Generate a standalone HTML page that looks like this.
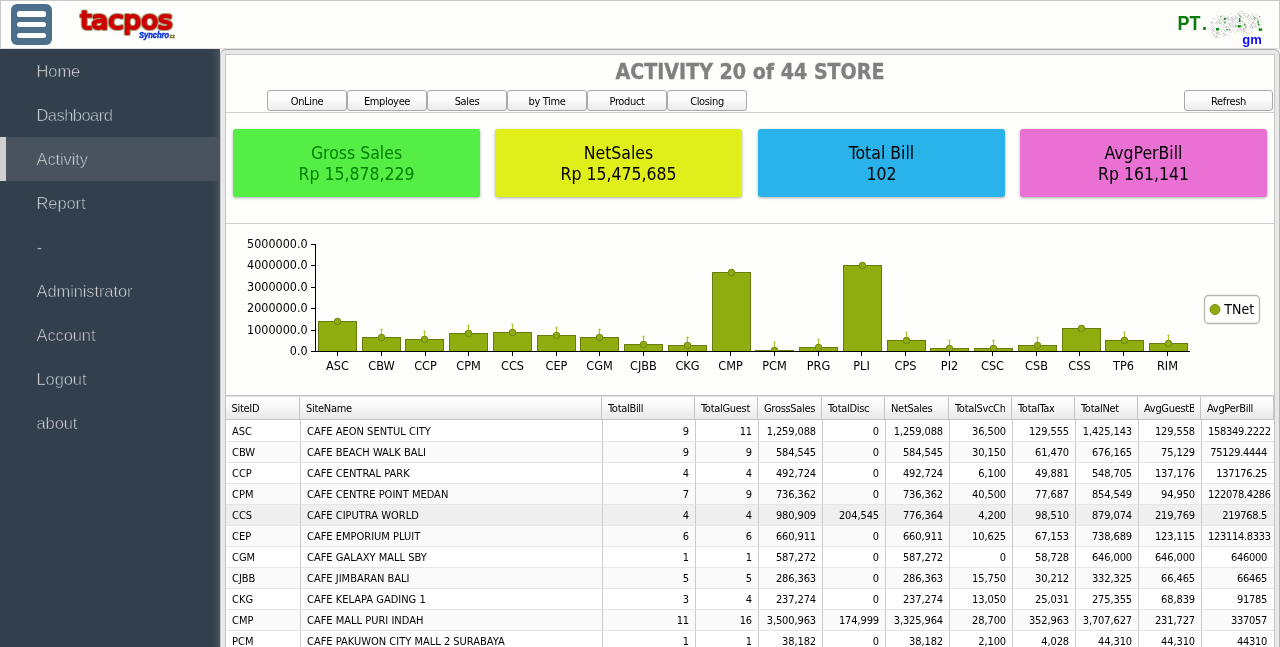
<!DOCTYPE html>
<html><head><meta charset="utf-8"><title>tacpos Synchro - Activity</title>
<style>
html,body{margin:0;padding:0}
body{width:1280px;height:647px;overflow:hidden;position:relative;background:#fdfdfb;font-family:"DejaVu Sans Condensed","DejaVu Sans","Liberation Sans",sans-serif;color:#000}
.abs{position:absolute}
#top{left:0;top:0;width:1278px;height:47px;background:#fdfdfb;border:1px solid #c8c8c8;border-bottom-color:#e0e0e0}
#burger{left:11px;top:4px;width:41px;height:41px;border-radius:6px;background:#4b6f8c}
#burger i{position:absolute;left:6px;width:29px;height:5.6px;border-radius:2.6px;background:#fdfdfb}
#side{left:0;top:49px;width:220px;height:598px;background:linear-gradient(90deg,#323f4d 0,#323f4d 210px,#39444f 215px,#4c555f 220px)}
#side div{position:absolute;left:0;width:220px;height:44px;line-height:45px;color:#dadcde;font-size:16.5px;text-indent:36.5px;font-family:"Liberation Sans",sans-serif;font-weight:normal;letter-spacing:-.1px;-webkit-text-stroke:.55px #323f4d}
#side div.act{-webkit-text-stroke-color:#48535f;background:linear-gradient(90deg,#cfcfcf 0,#cfcfcf 6px,#48535f 6px,#48535f 100%)}
#panel{left:220px;top:49px;width:1060px;height:610px;background:#e8e8e8;border-top:1px solid #a8a8a8;border-left:1px solid #c4c4c4;border-right:1px solid #b4b4b4;border-radius:6px 6px 0 0;box-sizing:border-box}
#inner{left:225px;top:54px;width:1048px;height:600px;background:#fefefd;border:1px solid #c6c6c6}
#title{left:226px;top:59px;width:1048px;text-align:center;font-weight:bold;font-size:21.2px;color:#808080;-webkit-text-stroke:.35px #808080;line-height:26px}
.btn{position:absolute;top:90px;height:19px;width:78px;border:1px solid #a9a9a9;border-radius:3px;background:linear-gradient(#ffffff,#fbfbfb 50%,#ececec);font-size:11px;line-height:22px;text-align:center;color:#000;letter-spacing:-.35px}
.hl{position:absolute;height:1px;background:#cfcfcf}
.card{position:absolute;top:129px;height:68px;width:247px;border-radius:3px;box-shadow:0 1px 3px rgba(0,0,0,.33);text-align:center;font-size:17.5px;line-height:21px}
.card span{display:block}
.card span:first-child{margin-top:14px}
#tbl{left:226px;top:395px;width:1048px;height:252px;overflow:hidden;font-size:11px}
.th{position:absolute;top:1px;height:24px;line-height:25px;box-sizing:border-box;border-top:1px solid #dedede;border-right:1px solid #c4c4c4;border-bottom:1px solid #c4c4c4;background:linear-gradient(#ffffff,#f9f9f9 40%,#e8e8e8);padding-left:6px;white-space:nowrap;color:#000;letter-spacing:-.3px}
.th span{display:block;overflow:hidden;margin-top:-1px}
.td{position:absolute;height:21px;line-height:21px;box-sizing:border-box;border-right:1px solid #cbcbcb;border-bottom:1px solid #e6e6e6;padding:0 6px;white-space:nowrap;color:#000}
.r{text-align:right;letter-spacing:-.12px}
.r.last{letter-spacing:-.3px;padding-right:7px}
#app{position:absolute;left:0;top:0;width:1280px;height:647px;overflow:hidden;will-change:transform}
</style></head><body><div id="app">

<div id="top" class="abs"></div>
<div id="burger" class="abs"><i style="top:7px"></i><i style="top:17.8px"></i><i style="top:28.6px"></i></div>
<svg class="abs" style="left:70px;top:0" width="130" height="49" viewBox="0 0 130 49">
<text x="10.5" y="29" font-family="DejaVu Sans, Liberation Sans, sans-serif" font-size="25.5" fill="#cc0000" stroke="#a8a17c" stroke-width="4.2" stroke-linejoin="round" textLength="92" lengthAdjust="spacingAndGlyphs">tacpos</text>
<text x="10.5" y="29" font-family="DejaVu Sans, Liberation Sans, sans-serif" font-size="25.5" fill="#cc0000" stroke="#cc0000" stroke-width="2.1" stroke-linejoin="round" textLength="92" lengthAdjust="spacingAndGlyphs">tacpos</text>
<text x="69" y="37.8" font-family="Liberation Sans, sans-serif" font-weight="bold" font-style="italic" font-size="8.6" fill="#0b35dd" stroke="#0b35dd" stroke-width=".5" textLength="30" lengthAdjust="spacingAndGlyphs">Synchro</text>
<text x="99.6" y="37.8" font-family="Liberation Sans, sans-serif" font-weight="bold" font-size="5.4" fill="#9a3c10" stroke="#6a7a20" stroke-width=".3">zz</text>
</svg>
<svg class="abs" style="left:1170px;top:2px" width="108" height="46" viewBox="0 0 108 46">
<text transform="scale(.93,1)" x="8.06 21.1 34.3" y="28" font-family="Liberation Sans, sans-serif" font-weight="bold" font-size="19.3" fill="#087c08">PT.</text>
<path d="M42.0 28.5l1 1M69.5 19.0l1 1M50.0 19.5l1 1M56.0 24.0l1 1M83.0 14.0l2.5 2.5M72.0 18.5l1 1M82.5 13.5l3 3M68.0 11.5l2.5 2.5M81.5 23.5l2 2M48.0 19.5l2.5 2.5M84.5 23.0l2.5 2.5M59.5 21.0l1 1M82.0 25.0l1 1M82.0 20.5l1 1M48.5 17.0l1.5 1.5M41.0 26.5l1 1M68.0 28.0v1.5M53.0 31.0l2.5 2.5M47.0 29.5v2.5M83.5 16.5l2 2M46.0 26.0l1 1M42.0 27.0l2 2M65.0 22.5l1 1M78.5 17.5l2 2M86.0 15.5l2.5 2.5M57.0 15.0v2M56.0 25.0v1M75.5 23.5v3M46.0 34.0l1.5 1.5" fill="none" stroke="#8c8c8c" stroke-width=".7"/><path d="M67.5 11.5l3 3M69.5 24.0l1 1M68.5 13.0l2.5 2.5M62.5 24.0l2 2M44.5 29.0l1 1M73.0 28.0l2.5 2.5M43.5 33.0l3 3M48.5 18.0l1 1M50.0 20.5l1 1M71.0 26.0v2.5M47.5 29.5l1.5 1.5M64.5 24.0l1 1M61.5 22.0l2 2M71.0 18.5l2.5 2.5M79.5 24.5l3 3M61.0 11.5l1 1M52.0 21.5l1.5 1.5M74.5 23.5l2.5 2.5M59.0 25.5l1 1M74.0 23.0l3 3M73.0 16.0l1 1M53.5 14.0l1 1M47.0 30.5l2.5 2.5M71.5 27.5l1.5 1.5M81.0 15.5l1 1M65.5 13.5l1 1M76.0 13.5l2.5 2.5M71.0 11.5l1 1M67.0 23.5v1.5M48.0 24.0l1 1M82.0 20.0l2 2M60.5 15.0l3 3M48.0 27.0v1.5M67.0 26.5l1.5 1.5M74.5 22.0l2.5 2.5M81.5 21.5v3M83.5 20.0l2 2M70.0 21.0l1 1M58.0 21.0l3 3M74.5 27.0l1.5 1.5M51.0 28.0v1M84.0 15.0v3M53.0 17.5v1.5M53.5 27.5l2.5 2.5M75.0 13.5l3 3M46.0 25.5l1.5 1.5M49.0 21.0l1 1M42.5 25.5l1.5 1.5M78.0 12.0l3 3M74.0 11.0l1 1M47.0 18.5v3M80.0 22.5l1 1" fill="none" stroke="#b2b2b2" stroke-width=".7"/><path d="M60.5 23.5l2 2M68.5 11.0l2.5 2.5M72.5 25.5l1 1M61.5 19.5l1 1M39.0 26.5v2M79.0 18.0l1.5 1.5M62.5 27.5l1 1M58.5 17.5v2M49.0 30.5l1.5 1.5M52.5 12.5l3 3M71.0 23.5v3M75.5 13.5l2.5 2.5M70.0 14.0l1 1M60.5 17.0l1 1M58.5 16.0l3 3M69.5 21.0l1 1M87.0 17.0l1 1M58.0 13.5v3M42.0 16.5l1 1M40.5 20.5l2 2M63.0 15.5l2.5 2.5M50.5 16.5l3 3M49.5 30.5l1 1M40.5 22.5l3 3M47.5 30.5v2.5M41.5 20.0l1 1M72.5 21.5l1.5 1.5M80.5 15.5l3 3M54.0 19.0v1.5M47.0 33.5l2 2M65.5 27.5l1 1M64.5 29.0v3M65.0 14.5l3 3M67.0 15.5v2M70.0 15.0l1 1M62.0 15.5l1 1M45.5 12.5l1.5 1.5M70.5 8.5l1 1M60.0 17.5l2 2M77.0 13.5v1M41.5 18.5l1 1M74.5 11.0l1 1M46.0 32.5l1.5 1.5M77.5 18.5l1 1M49.0 35.0v1M56.0 19.0l1 1M45.0 31.5l1.5 1.5M64.5 21.5l1 1M57.5 24.0l1 1M66.0 18.5v2.5M40.0 19.5l2.5 2.5M90.5 18.0v2M63.0 14.5l2 2M65.5 21.0v1.5M52.5 18.0v2.5M41.5 19.5l2 2M68.5 19.0v3M55.0 16.0l2 2M83.5 24.5l1.5 1.5M82.5 11.0l2.5 2.5M53.0 23.0l2 2M87.5 25.0l2 2M52.0 15.5v2M57.5 18.0l1 1M81.0 23.0l2.5 2.5M39.5 20.0l1 1M66.0 23.5v1M59.0 24.0l1.5 1.5M71.5 9.5l3 3M57.5 16.0l1.5 1.5M61.5 23.0l1 1M65.0 14.0l1 1M68.5 25.0l2 2M89.5 25.5v2.5M62.5 18.5l1.5 1.5M81.5 17.5l2.5 2.5M73.0 13.0l1 1M56.0 31.5l2.5 2.5M85.5 22.0v3M49.5 22.5l1 1M62.5 20.5l3 3M73.5 27.5v3M67.5 20.0v1M81.0 12.0l1.5 1.5M66.0 15.0l1.5 1.5M73.5 13.5l1 1M72.0 30.5l2 2M57.5 28.0v1M60.0 23.5l1 1M55.0 21.5l1 1M92.0 22.0v1M55.5 20.5v1M69.5 9.0v1.5M42.0 30.0l3 3M80.5 29.0l2 2M61.5 18.5l2.5 2.5M58.0 14.5v2M87.5 15.0l2 2M84.0 13.0l1 1M65.0 13.0l1.5 1.5M40.0 31.0l1 1M65.5 9.5l1 1M61.0 15.5l1.5 1.5M86.0 11.5l3 3M52.0 32.0l1.5 1.5M86.0 16.0l2 2M47.0 15.0l1 1M51.0 13.5l1 1M78.5 13.0l1.5 1.5M45.0 34.5l1 1M80.0 22.0v2.5M59.5 27.0l2.5 2.5M69.5 13.5v1M44.5 26.0l2.5 2.5M59.0 28.0l2.5 2.5M49.5 24.5v1M58.0 17.0v1M42.5 20.0l1 1M74.0 28.5l2.5 2.5M43.5 24.5l1 1M61.5 18.0l1 1M48.5 31.0l1 1M46.5 20.5l1.5 1.5M50.0 17.0v1M55.0 30.5v1M66.5 15.5l2 2M65.5 20.0l1 1M78.0 21.0l1 1M78.0 27.0l1 1M49.5 31.5l1 1M46.0 30.5l1.5 1.5M64.5 29.5l1 1M41.0 35.0l1.5 1.5M56.5 31.5l1.5 1.5M69.5 14.0l1.5 1.5M51.0 29.5l2.5 2.5M48.5 15.5l1 1M52.5 33.0l2.5 2.5M62.5 16.5l2 2M74.5 11.0l1 1M72.0 9.0l1.5 1.5M91.5 20.5l1 1M58.5 26.0v2M51.0 29.0l1 1M62.5 17.5v1.5M83.5 14.5l2 2M62.5 17.0l1.5 1.5M45.0 21.0l1 1M67.0 23.5l1 1M51.0 13.0v2.5M89.5 23.0l1.5 1.5M79.0 13.5v1M63.0 15.0l2.5 2.5M89.0 21.0v2M42.5 15.5l2.5 2.5M60.5 15.5l1 1M54.5 19.0l1 1M58.0 15.5v2.5M41.0 29.5l3 3M63.5 17.5l2.5 2.5M65.5 16.0l1.5 1.5M45.0 20.5l2.5 2.5M45.0 35.5l1 1M54.0 22.0l1.5 1.5M60.0 30.0l1 1M44.5 16.0l1 1M58.5 25.5l1 1M61.5 21.0l1 1M77.0 11.5l3 3" fill="none" stroke="#d2d2d2" stroke-width=".7"/>
<g fill="#108a10"><rect x="53.8" y="15.9" width="2" height="2"/><rect x="68.9" y="16.2" width="1.5" height="4"/><rect x="67.7" y="23" width="3" height="2.5"/><rect x="46" y="26" width="3" height="2.5"/><rect x="87.5" y="18.7" width="1.2" height="3"/><rect x="88.7" y="26.4" width="3.5" height="2.5"/><rect x="56" y="27.3" width="2" height="1"/><rect x="59" y="27.3" width="1" height="1"/><rect x="89.3" y="14.3" width="1" height="1"/><rect x="84.4" y="15.2" width="1" height="1"/><rect x="88" y="22" width="1.5" height="1.5"/><rect x="73.2" y="26.4" width="1" height="1"/><rect x="54.4" y="19.5" width="1" height="2"/><rect x="74.2" y="21.5" width="1" height="2"/><rect x="65.2" y="23.5" width="1" height="1"/><rect x="71.4" y="23.5" width="1" height="1"/><rect x="50.4" y="14.4" width="1" height="1"/><rect x="70.5" y="14.4" width="1" height="1"/></g>
<text x="72.3" y="42" font-family="Liberation Sans, sans-serif" font-weight="bold" font-size="13" fill="#0a0aff">gm</text>
</svg>
<div id="side" class="abs">
<div style="top:0px">Home</div>
<div style="top:44px;letter-spacing:-.55px">Dashboard</div>
<div class="act" style="top:88px">Activity</div>
<div style="top:132px">Report</div>
<div style="top:176px">-</div>
<div style="top:220px">Administrator</div>
<div style="top:264px">Account</div>
<div style="top:308px">Logout</div>
<div style="top:352px">about</div>
</div>
<div id="panel" class="abs"></div><div id="inner" class="abs"></div>
<div id="title" class="abs">ACTIVITY 20 of 44 STORE</div>
<div class="btn" style="left:267px">OnLine</div>
<div class="btn" style="left:347px">Employee</div>
<div class="btn" style="left:427px">Sales</div>
<div class="btn" style="left:507px">by Time</div>
<div class="btn" style="left:587px">Product</div>
<div class="btn" style="left:667px">Closing</div>
<div class="btn" style="left:1184px;width:87px">Refresh</div>
<div class="hl" style="left:226px;top:112px;width:1048px"></div>
<div class="card" style="left:233px;background:#55ee44;color:#008000"><span>Gross Sales</span><span>Rp 15,878,229</span></div>
<div class="card" style="left:495px;background:#e0ee1a;color:#000"><span>NetSales</span><span>Rp 15,475,685</span></div>
<div class="card" style="left:758px;background:#2ab2ea;color:#000"><span>Total Bill</span><span>102</span></div>
<div class="card" style="left:1020px;background:#ea70d4;color:#000"><span>AvgPerBill</span><span>Rp 161,141</span></div>
<div class="hl" style="left:226px;top:223px;width:1048px"></div>
<svg class="abs" style="left:226px;top:224px" width="1048" height="171" viewBox="226 224 1048 171" font-family="DejaVu Sans Condensed, DejaVu Sans, Liberation Sans, sans-serif">
<text x="307.6" y="355.4" text-anchor="end" font-size="12.45" fill="#000">0.0</text>
<rect x="311" y="351" width="5" height="1" fill="#000"/>
<text x="307.6" y="334.4" text-anchor="end" font-size="12.45" fill="#000">1000000.0</text>
<rect x="311" y="330" width="5" height="1" fill="#000"/>
<text x="307.6" y="312.4" text-anchor="end" font-size="12.45" fill="#000">2000000.0</text>
<rect x="311" y="308" width="5" height="1" fill="#000"/>
<text x="307.6" y="291.4" text-anchor="end" font-size="12.45" fill="#000">3000000.0</text>
<rect x="311" y="287" width="5" height="1" fill="#000"/>
<text x="307.6" y="269.4" text-anchor="end" font-size="12.45" fill="#000">4000000.0</text>
<rect x="311" y="265" width="5" height="1" fill="#000"/>
<text x="307.6" y="248.4" text-anchor="end" font-size="12.45" fill="#000">5000000.0</text>
<rect x="311" y="244" width="5" height="1" fill="#000"/>
<rect x="318.5" y="321.5" width="38" height="30.0" fill="#90ad10" stroke="#657d0e" stroke-width="1"/>
<circle cx="337.5" cy="321.5" r="3.3" fill="#8fab10" stroke="#6f8810" stroke-width="1"/>
<text x="337.5" y="370" text-anchor="middle" font-size="12.6" fill="#000">ASC</text>
<rect x="362.5" y="337.5" width="38" height="14.0" fill="#90ad10" stroke="#657d0e" stroke-width="1"/>
<path d="M381.5 337.5V329.5" stroke="#aec62c" stroke-width="1.2"/><circle cx="381.5" cy="329.5" r="1.1" fill="#aec62c"/>
<circle cx="381.5" cy="337.5" r="3.3" fill="#8fab10" stroke="#6f8810" stroke-width="1"/>
<text x="381.5" y="370" text-anchor="middle" font-size="12.6" fill="#000">CBW</text>
<rect x="405.5" y="339.5" width="38" height="12.0" fill="#90ad10" stroke="#657d0e" stroke-width="1"/>
<path d="M424.5 339.5V331.5" stroke="#aec62c" stroke-width="1.2"/><circle cx="424.5" cy="331.5" r="1.1" fill="#aec62c"/>
<circle cx="424.5" cy="339.5" r="3.3" fill="#8fab10" stroke="#6f8810" stroke-width="1"/>
<text x="425.5" y="370" text-anchor="middle" font-size="12.6" fill="#000">CCP</text>
<rect x="449.5" y="333.5" width="38" height="18.0" fill="#90ad10" stroke="#657d0e" stroke-width="1"/>
<path d="M468.5 333.5V325.5" stroke="#aec62c" stroke-width="1.2"/><circle cx="468.5" cy="325.5" r="1.1" fill="#aec62c"/>
<circle cx="468.5" cy="333.5" r="3.3" fill="#8fab10" stroke="#6f8810" stroke-width="1"/>
<text x="468.5" y="370" text-anchor="middle" font-size="12.6" fill="#000">CPM</text>
<rect x="493.5" y="332.5" width="38" height="19.0" fill="#90ad10" stroke="#657d0e" stroke-width="1"/>
<path d="M512.5 332.5V324.5" stroke="#aec62c" stroke-width="1.2"/><circle cx="512.5" cy="324.5" r="1.1" fill="#aec62c"/>
<circle cx="512.5" cy="332.5" r="3.3" fill="#8fab10" stroke="#6f8810" stroke-width="1"/>
<text x="512.5" y="370" text-anchor="middle" font-size="12.6" fill="#000">CCS</text>
<rect x="537.5" y="335.5" width="38" height="16.0" fill="#90ad10" stroke="#657d0e" stroke-width="1"/>
<path d="M556.5 335.5V327.5" stroke="#aec62c" stroke-width="1.2"/><circle cx="556.5" cy="327.5" r="1.1" fill="#aec62c"/>
<circle cx="556.5" cy="335.5" r="3.3" fill="#8fab10" stroke="#6f8810" stroke-width="1"/>
<text x="556.5" y="370" text-anchor="middle" font-size="12.6" fill="#000">CEP</text>
<rect x="580.5" y="337.5" width="38" height="14.0" fill="#90ad10" stroke="#657d0e" stroke-width="1"/>
<path d="M599.5 337.5V329.5" stroke="#aec62c" stroke-width="1.2"/><circle cx="599.5" cy="329.5" r="1.1" fill="#aec62c"/>
<circle cx="599.5" cy="337.5" r="3.3" fill="#8fab10" stroke="#6f8810" stroke-width="1"/>
<text x="599.5" y="370" text-anchor="middle" font-size="12.6" fill="#000">CGM</text>
<rect x="624.5" y="344.5" width="38" height="7.0" fill="#90ad10" stroke="#657d0e" stroke-width="1"/>
<path d="M643.5 344.5V336.5" stroke="#aec62c" stroke-width="1.2"/><circle cx="643.5" cy="336.5" r="1.1" fill="#aec62c"/>
<circle cx="643.5" cy="344.5" r="3.3" fill="#8fab10" stroke="#6f8810" stroke-width="1"/>
<text x="643.5" y="370" text-anchor="middle" font-size="12.6" fill="#000">CJBB</text>
<rect x="668.5" y="345.5" width="38" height="6.0" fill="#90ad10" stroke="#657d0e" stroke-width="1"/>
<path d="M687.5 345.5V337.5" stroke="#aec62c" stroke-width="1.2"/><circle cx="687.5" cy="337.5" r="1.1" fill="#aec62c"/>
<circle cx="687.5" cy="345.5" r="3.3" fill="#8fab10" stroke="#6f8810" stroke-width="1"/>
<text x="687.5" y="370" text-anchor="middle" font-size="12.6" fill="#000">CKG</text>
<rect x="712.5" y="272.5" width="38" height="79.0" fill="#90ad10" stroke="#657d0e" stroke-width="1"/>
<circle cx="731.5" cy="272.5" r="3.3" fill="#8fab10" stroke="#6f8810" stroke-width="1"/>
<text x="730.5" y="370" text-anchor="middle" font-size="12.6" fill="#000">CMP</text>
<rect x="755.5" y="350.5" width="38" height="1.0" fill="#90ad10" stroke="#657d0e" stroke-width="1"/>
<path d="M774.5 350.5V342.5" stroke="#aec62c" stroke-width="1.2"/><circle cx="774.5" cy="342.5" r="1.1" fill="#aec62c"/>
<circle cx="774.5" cy="350.5" r="3.3" fill="#8fab10" stroke="#6f8810" stroke-width="1"/>
<text x="774.5" y="370" text-anchor="middle" font-size="12.6" fill="#000">PCM</text>
<rect x="799.5" y="347.5" width="38" height="4.0" fill="#90ad10" stroke="#657d0e" stroke-width="1"/>
<path d="M818.5 347.5V339.5" stroke="#aec62c" stroke-width="1.2"/><circle cx="818.5" cy="339.5" r="1.1" fill="#aec62c"/>
<circle cx="818.5" cy="347.5" r="3.3" fill="#8fab10" stroke="#6f8810" stroke-width="1"/>
<text x="818.5" y="370" text-anchor="middle" font-size="12.6" fill="#000">PRG</text>
<rect x="843.5" y="265.5" width="38" height="86.0" fill="#90ad10" stroke="#657d0e" stroke-width="1"/>
<circle cx="862.5" cy="265.5" r="3.3" fill="#8fab10" stroke="#6f8810" stroke-width="1"/>
<text x="861.5" y="370" text-anchor="middle" font-size="12.6" fill="#000">PLI</text>
<rect x="887.5" y="340.5" width="38" height="11.0" fill="#90ad10" stroke="#657d0e" stroke-width="1"/>
<path d="M906.5 340.5V332.5" stroke="#aec62c" stroke-width="1.2"/><circle cx="906.5" cy="332.5" r="1.1" fill="#aec62c"/>
<circle cx="906.5" cy="340.5" r="3.3" fill="#8fab10" stroke="#6f8810" stroke-width="1"/>
<text x="905.5" y="370" text-anchor="middle" font-size="12.6" fill="#000">CPS</text>
<rect x="930.5" y="348.5" width="38" height="3.0" fill="#90ad10" stroke="#657d0e" stroke-width="1"/>
<path d="M949.5 348.5V340.5" stroke="#aec62c" stroke-width="1.2"/><circle cx="949.5" cy="340.5" r="1.1" fill="#aec62c"/>
<circle cx="949.5" cy="348.5" r="3.3" fill="#8fab10" stroke="#6f8810" stroke-width="1"/>
<text x="949.5" y="370" text-anchor="middle" font-size="12.6" fill="#000">PI2</text>
<rect x="974.5" y="348.5" width="38" height="3.0" fill="#90ad10" stroke="#657d0e" stroke-width="1"/>
<path d="M993.5 348.5V340.5" stroke="#aec62c" stroke-width="1.2"/><circle cx="993.5" cy="340.5" r="1.1" fill="#aec62c"/>
<circle cx="993.5" cy="348.5" r="3.3" fill="#8fab10" stroke="#6f8810" stroke-width="1"/>
<text x="992.5" y="370" text-anchor="middle" font-size="12.6" fill="#000">CSC</text>
<rect x="1018.5" y="345.5" width="38" height="6.0" fill="#90ad10" stroke="#657d0e" stroke-width="1"/>
<path d="M1037.5 345.5V337.5" stroke="#aec62c" stroke-width="1.2"/><circle cx="1037.5" cy="337.5" r="1.1" fill="#aec62c"/>
<circle cx="1037.5" cy="345.5" r="3.3" fill="#8fab10" stroke="#6f8810" stroke-width="1"/>
<text x="1036.5" y="370" text-anchor="middle" font-size="12.6" fill="#000">CSB</text>
<rect x="1062.5" y="328.5" width="38" height="23.0" fill="#90ad10" stroke="#657d0e" stroke-width="1"/>
<circle cx="1081.5" cy="328.5" r="3.3" fill="#8fab10" stroke="#6f8810" stroke-width="1"/>
<text x="1079.5" y="370" text-anchor="middle" font-size="12.6" fill="#000">CSS</text>
<rect x="1105.5" y="340.5" width="38" height="11.0" fill="#90ad10" stroke="#657d0e" stroke-width="1"/>
<path d="M1124.5 340.5V332.5" stroke="#aec62c" stroke-width="1.2"/><circle cx="1124.5" cy="332.5" r="1.1" fill="#aec62c"/>
<circle cx="1124.5" cy="340.5" r="3.3" fill="#8fab10" stroke="#6f8810" stroke-width="1"/>
<text x="1123.5" y="370" text-anchor="middle" font-size="12.6" fill="#000">TP6</text>
<rect x="1149.5" y="343.5" width="38" height="8.0" fill="#90ad10" stroke="#657d0e" stroke-width="1"/>
<path d="M1168.5 343.5V335.5" stroke="#aec62c" stroke-width="1.2"/><circle cx="1168.5" cy="335.5" r="1.1" fill="#aec62c"/>
<circle cx="1168.5" cy="343.5" r="3.3" fill="#8fab10" stroke="#6f8810" stroke-width="1"/>
<text x="1167.5" y="370" text-anchor="middle" font-size="12.6" fill="#000">RIM</text>
<rect x="316" y="352" width="880" height="5" fill="#fefefc"/>
<rect x="315" y="244" width="1" height="108" fill="#000"/>
<rect x="311" y="351" width="879" height="1" fill="#000"/>
<g fill="#000"><rect x="337" y="352" width="1" height="4"/><rect x="381" y="352" width="1" height="4"/><rect x="425" y="352" width="1" height="4"/><rect x="468" y="352" width="1" height="4"/><rect x="512" y="352" width="1" height="4"/><rect x="556" y="352" width="1" height="4"/><rect x="599" y="352" width="1" height="4"/><rect x="643" y="352" width="1" height="4"/><rect x="687" y="352" width="1" height="4"/><rect x="730" y="352" width="1" height="4"/><rect x="774" y="352" width="1" height="4"/><rect x="818" y="352" width="1" height="4"/><rect x="861" y="352" width="1" height="4"/><rect x="905" y="352" width="1" height="4"/><rect x="949" y="352" width="1" height="4"/><rect x="992" y="352" width="1" height="4"/><rect x="1036" y="352" width="1" height="4"/><rect x="1079" y="352" width="1" height="4"/><rect x="1123" y="352" width="1" height="4"/><rect x="1167" y="352" width="1" height="4"/></g>
<rect x="1204.5" y="295.5" width="55" height="28" rx="4" fill="#fefefc" stroke="#b4b4b4" stroke-width="1.3"/>
<circle cx="1215" cy="309.5" r="5" fill="#8fab10" stroke="#768f12"/>
<text x="1224.3" y="314" font-size="14" fill="#000">TNet</text>
</svg>
<div class="hl" style="left:226px;top:395px;width:1048px;background:#c4c4c4"></div>
<div id="tbl" class="abs">
<div class="th" style="left:0px;width:74px;padding-left:5.5px;"><span style="width:61px">SiteID</span></div>
<div class="th" style="left:74px;width:302px;"><span style="width:289px">SiteName</span></div>
<div class="th" style="left:376px;width:93px;"><span style="width:80px">TotalBill</span></div>
<div class="th" style="left:469px;width:63px;"><span style="width:50px">TotalGuest</span></div>
<div class="th" style="left:532px;width:64px;"><span style="width:51px">GrossSales</span></div>
<div class="th" style="left:596px;width:63px;"><span style="width:50px">TotalDisc</span></div>
<div class="th" style="left:659px;width:64px;"><span style="width:51px">NetSales</span></div>
<div class="th" style="left:723px;width:63px;"><span style="width:50px">TotalSvcCh</span></div>
<div class="th" style="left:786px;width:63px;"><span style="width:50px">TotalTax</span></div>
<div class="th" style="left:849px;width:63px;"><span style="width:50px">TotalNet</span></div>
<div class="th" style="left:912px;width:63px;"><span style="width:50px">AvgGuestB</span></div>
<div class="th" style="left:975px;width:73px;"><span style="width:60px">AvgPerBill</span></div>
<div class="td" style="left:0px;top:25px;width:75px;height:22px;line-height:24px;background:#ffffff">ASC</div>
<div class="td" style="left:75px;top:25px;width:302px;height:22px;line-height:24px;background:#ffffff">CAFE AEON SENTUL CITY</div>
<div class="td r" style="left:377px;top:25px;width:93px;height:22px;line-height:24px;background:#ffffff">9</div>
<div class="td r" style="left:470px;top:25px;width:63px;height:22px;line-height:24px;background:#ffffff">11</div>
<div class="td r" style="left:533px;top:25px;width:64px;height:22px;line-height:24px;background:#ffffff">1,259,088</div>
<div class="td r" style="left:597px;top:25px;width:63px;height:22px;line-height:24px;background:#ffffff">0</div>
<div class="td r" style="left:660px;top:25px;width:64px;height:22px;line-height:24px;background:#ffffff">1,259,088</div>
<div class="td r" style="left:724px;top:25px;width:63px;height:22px;line-height:24px;background:#ffffff">36,500</div>
<div class="td r" style="left:787px;top:25px;width:63px;height:22px;line-height:24px;background:#ffffff">129,555</div>
<div class="td r" style="left:850px;top:25px;width:63px;height:22px;line-height:24px;background:#ffffff">1,425,143</div>
<div class="td r" style="left:913px;top:25px;width:63px;height:22px;line-height:24px;background:#ffffff">129,558</div>
<div class="td r last" style="left:976px;top:25px;width:73px;height:22px;line-height:24px;background:#ffffff">158349.2222</div>
<div class="td" style="left:0px;top:47px;width:75px;height:21px;background:#fafafa">CBW</div>
<div class="td" style="left:75px;top:47px;width:302px;height:21px;background:#fafafa">CAFE BEACH WALK BALI</div>
<div class="td r" style="left:377px;top:47px;width:93px;height:21px;background:#fafafa">9</div>
<div class="td r" style="left:470px;top:47px;width:63px;height:21px;background:#fafafa">9</div>
<div class="td r" style="left:533px;top:47px;width:64px;height:21px;background:#fafafa">584,545</div>
<div class="td r" style="left:597px;top:47px;width:63px;height:21px;background:#fafafa">0</div>
<div class="td r" style="left:660px;top:47px;width:64px;height:21px;background:#fafafa">584,545</div>
<div class="td r" style="left:724px;top:47px;width:63px;height:21px;background:#fafafa">30,150</div>
<div class="td r" style="left:787px;top:47px;width:63px;height:21px;background:#fafafa">61,470</div>
<div class="td r" style="left:850px;top:47px;width:63px;height:21px;background:#fafafa">676,165</div>
<div class="td r" style="left:913px;top:47px;width:63px;height:21px;background:#fafafa">75,129</div>
<div class="td r last" style="left:976px;top:47px;width:73px;height:21px;background:#fafafa">75129.4444</div>
<div class="td" style="left:0px;top:68px;width:75px;height:21px;background:#ffffff">CCP</div>
<div class="td" style="left:75px;top:68px;width:302px;height:21px;background:#ffffff">CAFE CENTRAL PARK</div>
<div class="td r" style="left:377px;top:68px;width:93px;height:21px;background:#ffffff">4</div>
<div class="td r" style="left:470px;top:68px;width:63px;height:21px;background:#ffffff">4</div>
<div class="td r" style="left:533px;top:68px;width:64px;height:21px;background:#ffffff">492,724</div>
<div class="td r" style="left:597px;top:68px;width:63px;height:21px;background:#ffffff">0</div>
<div class="td r" style="left:660px;top:68px;width:64px;height:21px;background:#ffffff">492,724</div>
<div class="td r" style="left:724px;top:68px;width:63px;height:21px;background:#ffffff">6,100</div>
<div class="td r" style="left:787px;top:68px;width:63px;height:21px;background:#ffffff">49,881</div>
<div class="td r" style="left:850px;top:68px;width:63px;height:21px;background:#ffffff">548,705</div>
<div class="td r" style="left:913px;top:68px;width:63px;height:21px;background:#ffffff">137,176</div>
<div class="td r last" style="left:976px;top:68px;width:73px;height:21px;background:#ffffff">137176.25</div>
<div class="td" style="left:0px;top:89px;width:75px;height:21px;background:#fafafa">CPM</div>
<div class="td" style="left:75px;top:89px;width:302px;height:21px;background:#fafafa">CAFE CENTRE POINT MEDAN</div>
<div class="td r" style="left:377px;top:89px;width:93px;height:21px;background:#fafafa">7</div>
<div class="td r" style="left:470px;top:89px;width:63px;height:21px;background:#fafafa">9</div>
<div class="td r" style="left:533px;top:89px;width:64px;height:21px;background:#fafafa">736,362</div>
<div class="td r" style="left:597px;top:89px;width:63px;height:21px;background:#fafafa">0</div>
<div class="td r" style="left:660px;top:89px;width:64px;height:21px;background:#fafafa">736,362</div>
<div class="td r" style="left:724px;top:89px;width:63px;height:21px;background:#fafafa">40,500</div>
<div class="td r" style="left:787px;top:89px;width:63px;height:21px;background:#fafafa">77,687</div>
<div class="td r" style="left:850px;top:89px;width:63px;height:21px;background:#fafafa">854,549</div>
<div class="td r" style="left:913px;top:89px;width:63px;height:21px;background:#fafafa">94,950</div>
<div class="td r last" style="left:976px;top:89px;width:73px;height:21px;background:#fafafa">122078.4286</div>
<div class="td" style="left:0px;top:110px;width:75px;height:21px;background:#efefef">CCS</div>
<div class="td" style="left:75px;top:110px;width:302px;height:21px;background:#efefef">CAFE CIPUTRA WORLD</div>
<div class="td r" style="left:377px;top:110px;width:93px;height:21px;background:#efefef">4</div>
<div class="td r" style="left:470px;top:110px;width:63px;height:21px;background:#efefef">4</div>
<div class="td r" style="left:533px;top:110px;width:64px;height:21px;background:#efefef">980,909</div>
<div class="td r" style="left:597px;top:110px;width:63px;height:21px;background:#efefef">204,545</div>
<div class="td r" style="left:660px;top:110px;width:64px;height:21px;background:#efefef">776,364</div>
<div class="td r" style="left:724px;top:110px;width:63px;height:21px;background:#efefef">4,200</div>
<div class="td r" style="left:787px;top:110px;width:63px;height:21px;background:#efefef">98,510</div>
<div class="td r" style="left:850px;top:110px;width:63px;height:21px;background:#efefef">879,074</div>
<div class="td r" style="left:913px;top:110px;width:63px;height:21px;background:#efefef">219,769</div>
<div class="td r last" style="left:976px;top:110px;width:73px;height:21px;background:#efefef">219768.5</div>
<div class="td" style="left:0px;top:131px;width:75px;height:21px;background:#fafafa">CEP</div>
<div class="td" style="left:75px;top:131px;width:302px;height:21px;background:#fafafa">CAFE EMPORIUM PLUIT</div>
<div class="td r" style="left:377px;top:131px;width:93px;height:21px;background:#fafafa">6</div>
<div class="td r" style="left:470px;top:131px;width:63px;height:21px;background:#fafafa">6</div>
<div class="td r" style="left:533px;top:131px;width:64px;height:21px;background:#fafafa">660,911</div>
<div class="td r" style="left:597px;top:131px;width:63px;height:21px;background:#fafafa">0</div>
<div class="td r" style="left:660px;top:131px;width:64px;height:21px;background:#fafafa">660,911</div>
<div class="td r" style="left:724px;top:131px;width:63px;height:21px;background:#fafafa">10,625</div>
<div class="td r" style="left:787px;top:131px;width:63px;height:21px;background:#fafafa">67,153</div>
<div class="td r" style="left:850px;top:131px;width:63px;height:21px;background:#fafafa">738,689</div>
<div class="td r" style="left:913px;top:131px;width:63px;height:21px;background:#fafafa">123,115</div>
<div class="td r last" style="left:976px;top:131px;width:73px;height:21px;background:#fafafa">123114.8333</div>
<div class="td" style="left:0px;top:152px;width:75px;height:21px;background:#ffffff">CGM</div>
<div class="td" style="left:75px;top:152px;width:302px;height:21px;background:#ffffff">CAFE GALAXY MALL SBY</div>
<div class="td r" style="left:377px;top:152px;width:93px;height:21px;background:#ffffff">1</div>
<div class="td r" style="left:470px;top:152px;width:63px;height:21px;background:#ffffff">1</div>
<div class="td r" style="left:533px;top:152px;width:64px;height:21px;background:#ffffff">587,272</div>
<div class="td r" style="left:597px;top:152px;width:63px;height:21px;background:#ffffff">0</div>
<div class="td r" style="left:660px;top:152px;width:64px;height:21px;background:#ffffff">587,272</div>
<div class="td r" style="left:724px;top:152px;width:63px;height:21px;background:#ffffff">0</div>
<div class="td r" style="left:787px;top:152px;width:63px;height:21px;background:#ffffff">58,728</div>
<div class="td r" style="left:850px;top:152px;width:63px;height:21px;background:#ffffff">646,000</div>
<div class="td r" style="left:913px;top:152px;width:63px;height:21px;background:#ffffff">646,000</div>
<div class="td r last" style="left:976px;top:152px;width:73px;height:21px;background:#ffffff">646000</div>
<div class="td" style="left:0px;top:173px;width:75px;height:21px;background:#fafafa">CJBB</div>
<div class="td" style="left:75px;top:173px;width:302px;height:21px;background:#fafafa">CAFE JIMBARAN BALI</div>
<div class="td r" style="left:377px;top:173px;width:93px;height:21px;background:#fafafa">5</div>
<div class="td r" style="left:470px;top:173px;width:63px;height:21px;background:#fafafa">5</div>
<div class="td r" style="left:533px;top:173px;width:64px;height:21px;background:#fafafa">286,363</div>
<div class="td r" style="left:597px;top:173px;width:63px;height:21px;background:#fafafa">0</div>
<div class="td r" style="left:660px;top:173px;width:64px;height:21px;background:#fafafa">286,363</div>
<div class="td r" style="left:724px;top:173px;width:63px;height:21px;background:#fafafa">15,750</div>
<div class="td r" style="left:787px;top:173px;width:63px;height:21px;background:#fafafa">30,212</div>
<div class="td r" style="left:850px;top:173px;width:63px;height:21px;background:#fafafa">332,325</div>
<div class="td r" style="left:913px;top:173px;width:63px;height:21px;background:#fafafa">66,465</div>
<div class="td r last" style="left:976px;top:173px;width:73px;height:21px;background:#fafafa">66465</div>
<div class="td" style="left:0px;top:194px;width:75px;height:21px;background:#ffffff">CKG</div>
<div class="td" style="left:75px;top:194px;width:302px;height:21px;background:#ffffff">CAFE KELAPA GADING 1</div>
<div class="td r" style="left:377px;top:194px;width:93px;height:21px;background:#ffffff">3</div>
<div class="td r" style="left:470px;top:194px;width:63px;height:21px;background:#ffffff">4</div>
<div class="td r" style="left:533px;top:194px;width:64px;height:21px;background:#ffffff">237,274</div>
<div class="td r" style="left:597px;top:194px;width:63px;height:21px;background:#ffffff">0</div>
<div class="td r" style="left:660px;top:194px;width:64px;height:21px;background:#ffffff">237,274</div>
<div class="td r" style="left:724px;top:194px;width:63px;height:21px;background:#ffffff">13,050</div>
<div class="td r" style="left:787px;top:194px;width:63px;height:21px;background:#ffffff">25,031</div>
<div class="td r" style="left:850px;top:194px;width:63px;height:21px;background:#ffffff">275,355</div>
<div class="td r" style="left:913px;top:194px;width:63px;height:21px;background:#ffffff">68,839</div>
<div class="td r last" style="left:976px;top:194px;width:73px;height:21px;background:#ffffff">91785</div>
<div class="td" style="left:0px;top:215px;width:75px;height:21px;background:#fafafa">CMP</div>
<div class="td" style="left:75px;top:215px;width:302px;height:21px;background:#fafafa">CAFE MALL PURI INDAH</div>
<div class="td r" style="left:377px;top:215px;width:93px;height:21px;background:#fafafa">11</div>
<div class="td r" style="left:470px;top:215px;width:63px;height:21px;background:#fafafa">16</div>
<div class="td r" style="left:533px;top:215px;width:64px;height:21px;background:#fafafa">3,500,963</div>
<div class="td r" style="left:597px;top:215px;width:63px;height:21px;background:#fafafa">174,999</div>
<div class="td r" style="left:660px;top:215px;width:64px;height:21px;background:#fafafa">3,325,964</div>
<div class="td r" style="left:724px;top:215px;width:63px;height:21px;background:#fafafa">28,700</div>
<div class="td r" style="left:787px;top:215px;width:63px;height:21px;background:#fafafa">352,963</div>
<div class="td r" style="left:850px;top:215px;width:63px;height:21px;background:#fafafa">3,707,627</div>
<div class="td r" style="left:913px;top:215px;width:63px;height:21px;background:#fafafa">231,727</div>
<div class="td r last" style="left:976px;top:215px;width:73px;height:21px;background:#fafafa">337057</div>
<div class="td" style="left:0px;top:236px;width:75px;height:21px;background:#ffffff">PCM</div>
<div class="td" style="left:75px;top:236px;width:302px;height:21px;background:#ffffff">CAFE PAKUWON CITY MALL 2 SURABAYA</div>
<div class="td r" style="left:377px;top:236px;width:93px;height:21px;background:#ffffff">1</div>
<div class="td r" style="left:470px;top:236px;width:63px;height:21px;background:#ffffff">1</div>
<div class="td r" style="left:533px;top:236px;width:64px;height:21px;background:#ffffff">38,182</div>
<div class="td r" style="left:597px;top:236px;width:63px;height:21px;background:#ffffff">0</div>
<div class="td r" style="left:660px;top:236px;width:64px;height:21px;background:#ffffff">38,182</div>
<div class="td r" style="left:724px;top:236px;width:63px;height:21px;background:#ffffff">2,100</div>
<div class="td r" style="left:787px;top:236px;width:63px;height:21px;background:#ffffff">4,028</div>
<div class="td r" style="left:850px;top:236px;width:63px;height:21px;background:#ffffff">44,310</div>
<div class="td r" style="left:913px;top:236px;width:63px;height:21px;background:#ffffff">44,310</div>
<div class="td r last" style="left:976px;top:236px;width:73px;height:21px;background:#ffffff">44310</div>
</div>
</div></body></html>
